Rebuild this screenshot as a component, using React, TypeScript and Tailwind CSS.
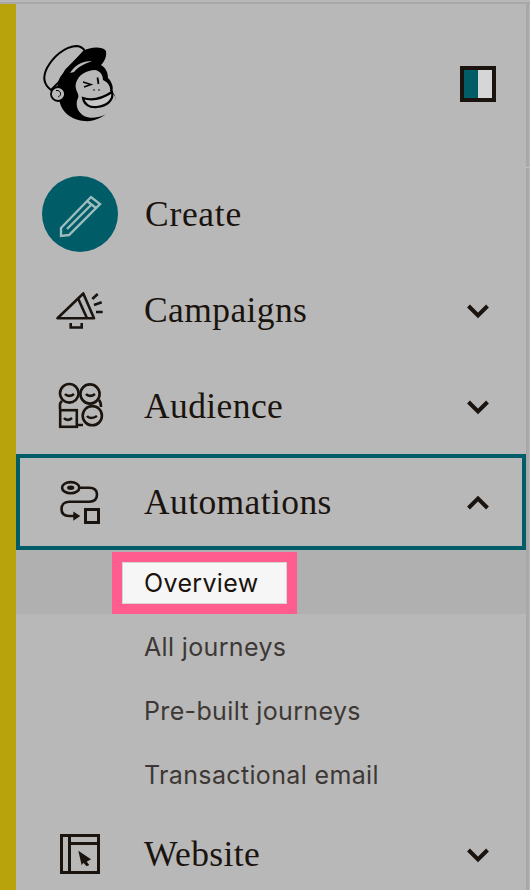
const INK = "#1a130e";

function Chevron({ up = false, right = 36, top = 2 }: { up?: boolean; right?: number; top?: number }) {
  return (
    <svg
      width="24"
      height="16"
      viewBox="0 0 24 16"
      className="ml-auto shrink-0"
      style={{ marginRight: right, marginTop: top }}
    >
      <polyline
        points={up ? "2.5,13 12,3.5 21.5,13" : "2.5,3 12,12.5 21.5,3"}
        fill="none"
        stroke={INK}
        strokeWidth="4"
      />
    </svg>
  );
}

function Logo() {
  return (
    <svg width="100" height="100" viewBox="0 0 100 100" className="shrink-0">
      <path d="M21,60 C13,54 13,46 17,38 C23,27 34,17 46,16 C50,16 53,18 55,21 L36,40 L29,52 Z" fill="#b8b8b8" stroke="#000" strokeWidth="2" />
      <path d="M53,21 C60,17 72,16 76,21 C77,27 74,32 71,35 C76,38 78,43 78,48 C82,52 84,58 82,62 C87,66 86,72 82,77 C76,87 64,92 54,91 C44,90 35,85 31,76 L26,62 C28,55 28,50 31,46 Z" fill="#000" />
      <path d="M40,43 C45,35 52,31 62,31 C54,34 48,37 44,42 Z" fill="#b8b8b8" />
      <circle cx="28" cy="64" r="7" fill="#b8b8b8" stroke="#000" strokeWidth="1.8" />
      <path d="M26,60.5 C29,60 31,62 30.5,64.5 C30,66 29,66.5 28,67" fill="none" stroke="#000" strokeWidth="1" />
      <path d="M46,53 C48,45 57,40 65,40 C71,41 73,46 73,50 C78,52 81,57 80,61 C86,65 88,72 83,78 C77,87 62,90 54,86 C47,82 45,74 48,68 C50,64 44,60 46,53 Z" fill="#b8b8b8" />
      <path d="M53,52 L61,54.5 L54,57" fill="none" stroke="#000" strokeWidth="1.5" />
      <path d="M67.5,47.5 L68.5,54" fill="none" stroke="#000" strokeWidth="1.8" />
      <circle cx="64" cy="60" r="0.8" fill="#000" />
      <circle cx="69" cy="60" r="0.8" fill="#000" />
      <path d="M53,68 C62,71 73,68 82,62 C84,70 77,76 67,77 C59,78 54,74 53,68 Z" fill="#c8c8c8" stroke="#000" strokeWidth="2.2" />
    </svg>
  );
}

function Megaphone() {
  return (
    <svg width="48" height="48" viewBox="0 0 48 48" fill="none" stroke={INK} strokeWidth="2.6" className="shrink-0">
      <path d="M1.5,32.3 L27.3,7.5 L38,32.3 Z" strokeLinejoin="round" />
      <path d="M22.3,13 L31,32.3" />
      <path d="M14.7,37 V41.5 H25.7 V37" />
      <path d="M36.3,13 L41.7,8 M38,19 L45.7,16.3 M40,26 H46.7" />
    </svg>
  );
}

function AudienceIcon() {
  return (
    <svg width="48" height="48" viewBox="0 0 48 48" fill="none" stroke={INK} strokeWidth="2.6" className="shrink-0">
      <path d="M4,27 V22 C4,21 5,20 6,19 M43,18 C45,20 45,22 45,25 M21,43 H27" />
      <circle cx="13.3" cy="11.3" r="9.3" />
      <circle cx="34" cy="12" r="9.6" />
      <circle cx="36.3" cy="33.7" r="9.6" />
      <rect x="4.2" y="28.2" width="16.6" height="16.6" />
      <path d="M9,12 C11,14.5 15,14.5 18,12 M30,12 C32,14.5 36,14.5 39,12 M31,34 C33,36.5 37,36.5 41,34 M8,36 C10,38.5 13,38.5 16,36" />
    </svg>
  );
}

function AutomationsIcon() {
  return (
    <svg width="48" height="48" viewBox="0 0 48 48" fill="none" stroke={INK} strokeWidth="2.6" className="shrink-0">
      <ellipse cx="14.7" cy="9.7" rx="8.6" ry="5.6" />
      <ellipse cx="14.7" cy="9.7" rx="3.6" ry="2.2" fill={INK} stroke="none" />
      <path d="M24,9.7 H33 C38,9.7 41,12 41,16.5 C41,21 38,23.7 33,23.7 H13 C8,23.7 5.5,27 5.5,31 C5.5,35.5 8,38 13,38 H19" />
      <path d="M17.3,33.5 L24.3,38 L17.3,42.7 Z" fill={INK} stroke="none" />
      <rect x="29.5" y="31.5" width="13" height="13" strokeWidth="3" />
    </svg>
  );
}

function WebsiteIcon() {
  return (
    <svg width="48" height="48" viewBox="0 0 48 48" fill="none" stroke={INK} strokeWidth="3" className="shrink-0">
      <rect x="5.5" y="5.5" width="37" height="37" />
      <path d="M13.5,5.5 V42.5 M13.5,13.5 H42.5" />
      <path d="M22.3,20.7 L35,29.3 L30.7,31.7 L33.3,35 L30.7,36.2 L27.3,32.7 L25.7,35.3 Z" fill={INK} stroke="none" />
    </svg>
  );
}

function NavRow({ label, icon }: { label: string; icon: React.ReactNode }) {
  return (
    <div className="flex h-24 items-center pl-10">
      {icon}
      <span className="ml-10 pt-[2px] font-['Liberation_Serif',serif] text-[35.5px] leading-none tracking-[0.4px] text-[#1a130e]">{label}</span>
      <Chevron />
    </div>
  );
}

function SubItem({ label }: { label: string }) {
  return (
    <div className="flex h-16 items-center pl-[128px] pt-[3px] font-['Inter',sans-serif] text-[25px] leading-none tracking-[0.35px] text-[#3d3835]">
      {label}
    </div>
  );
}

export default function App() {
  return (
    <div className="h-[890px] w-[530px] overflow-hidden bg-[#b8b8b8]">
      <div className="h-[2px]" />
      <div className="h-[2px] bg-[#a8a8a8]" />
      <div className="flex h-[886px]">
        <div className="w-4 shrink-0 bg-[#b8a30c]" />
        <div className="w-[510px] shrink-0">
          <div className="flex h-[162px] items-start justify-between pl-[14px]">
            <div className="mt-[26px]">
              <Logo />
            </div>
            <div className="mr-[30px] mt-[62px] flex h-9 w-9 border-4 border-[#1a130e]">
              <div className="w-[14px] bg-[#005c66]" />
              <div className="flex-1 bg-[#d6d6d6]" />
            </div>
          </div>
          <div className="flex h-24 items-center pl-[26px]">
            <div className="flex h-[76px] w-[76px] items-center justify-center rounded-full bg-[#005c66]">
              <svg width="48" height="48" viewBox="0 0 48 48" fill="none" stroke="#9dbcbe" strokeWidth="2.4">
                <path d="M5,38 L35,7 L44,14 L13,45 L5,46 Z" />
                <path d="M11,39 L36,14 M31,11 L40,18" />
              </svg>
            </div>
            <span className="ml-[27px] pt-[2px] font-['Liberation_Serif',serif] text-[35.5px] leading-none tracking-[0.7px] text-[#1a130e]">Create</span>
          </div>
          <NavRow label="Campaigns" icon={<Megaphone />} />
          <NavRow label="Audience" icon={<AudienceIcon />} />
          <div className="flex h-24 items-center border-4 border-[#005c66] pl-9">
            <AutomationsIcon />
            <span className="ml-10 pt-[2px] font-['Liberation_Serif',serif] text-[35.5px] leading-none tracking-[0.4px] text-[#1a130e]">Automations</span>
            <Chevron up right={32} top={1} />
          </div>
          <div className="flex h-16 items-end bg-[#b0b0b0] pl-24">
            <div className="h-[62px] border-[10px] border-[#ff5c8f]">
              <div className="flex h-[42px] w-[165px] items-center border border-[#d6d6d6] bg-[#f6f6f6] pl-[21px] pt-[1px] font-['Inter',sans-serif] text-[25px] leading-none tracking-[0.35px] text-[#1a130e]">
                Overview
              </div>
            </div>
          </div>
          <SubItem label="All journeys" />
          <SubItem label="Pre-built journeys" />
          <SubItem label="Transactional email" />
          <NavRow label="Website" icon={<WebsiteIcon />} />
        </div>
        <div className="w-[3px] shrink-0 bg-[#a8a8a8] pt-[163px]">
          <div className="h-px bg-[#c4c4c4]" />
        </div>
      </div>
    </div>
  );
}
